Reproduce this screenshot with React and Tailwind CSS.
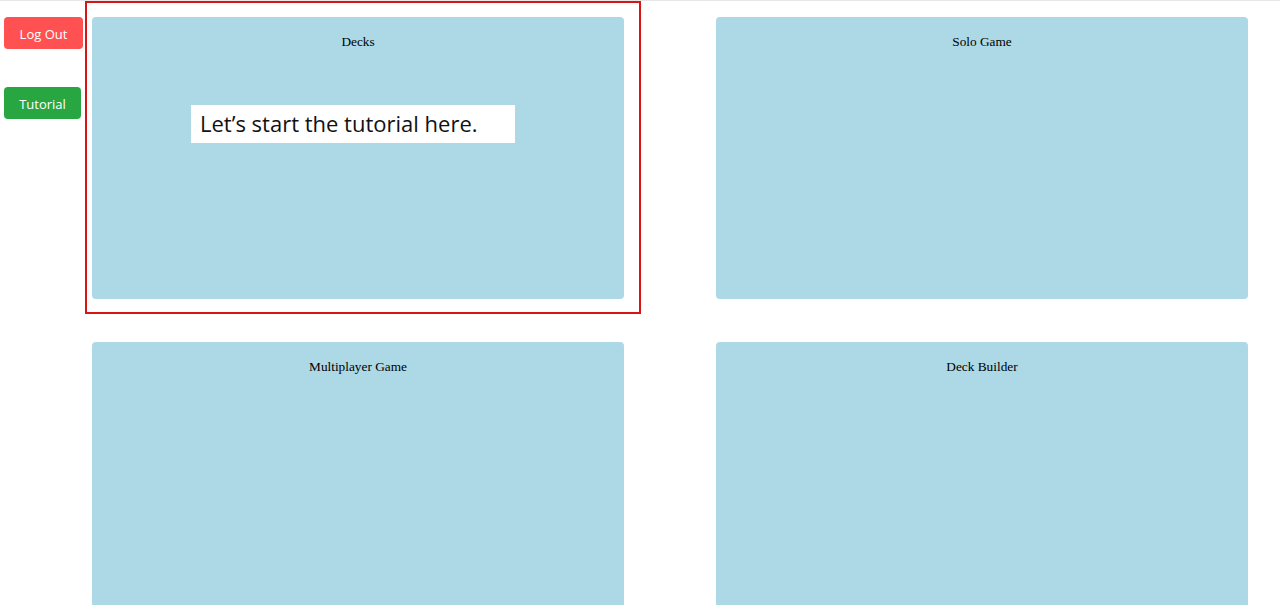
import React from "react";

const cards = ["Decks", "Solo Game", "Multiplayer Game", "Deck Builder"];

export default function App() {
    return (
        <div className="relative w-full h-[605px] overflow-hidden bg-white border-t border-[#e6e6e6]">
            <div className="flex flex-row">
                <div className="flex flex-col items-start gap-y-[38px] pl-1 pt-4 w-[92px] shrink-0">
                    <button
                        type="button"
                        className="h-8 w-[79px] rounded bg-[#ff5151] pt-[3px] text-white text-[13px] font-['Open_Sans',sans-serif]"
                    >
                        Log Out
                    </button>
                    <button
                        type="button"
                        className="h-8 w-[77px] rounded bg-[#28a641] pt-[3px] text-white text-[13px] font-['Open_Sans',sans-serif]"
                    >
                        Tutorial
                    </button>
                </div>
                <div className="grid grid-cols-[532px_532px] gap-x-[92px] gap-y-[43px] pt-4">
                    {cards.map((name, index) => (
                        <div
                            key={index}
                            className="h-[282px] rounded bg-[#add8e6] pt-[15px] text-center text-[13.3px] text-black font-['Liberation_Serif',serif]"
                        >
                            {name}
                        </div>
                    ))}
                </div>
            </div>

            {/* tutorial highlight */}
            <div className="absolute left-[85px] top-0 w-[556px] h-[313px] border-2 border-[#d91414] pointer-events-none"></div>
            <div className="absolute left-[191px] top-[104px] w-[324px] h-[38px] bg-white pl-[9px] pb-[2px] flex items-center text-[22px] text-[#111] font-['Open_Sans',sans-serif]">
                Let’s start the tutorial here.
            </div>
        </div>
    );
}
